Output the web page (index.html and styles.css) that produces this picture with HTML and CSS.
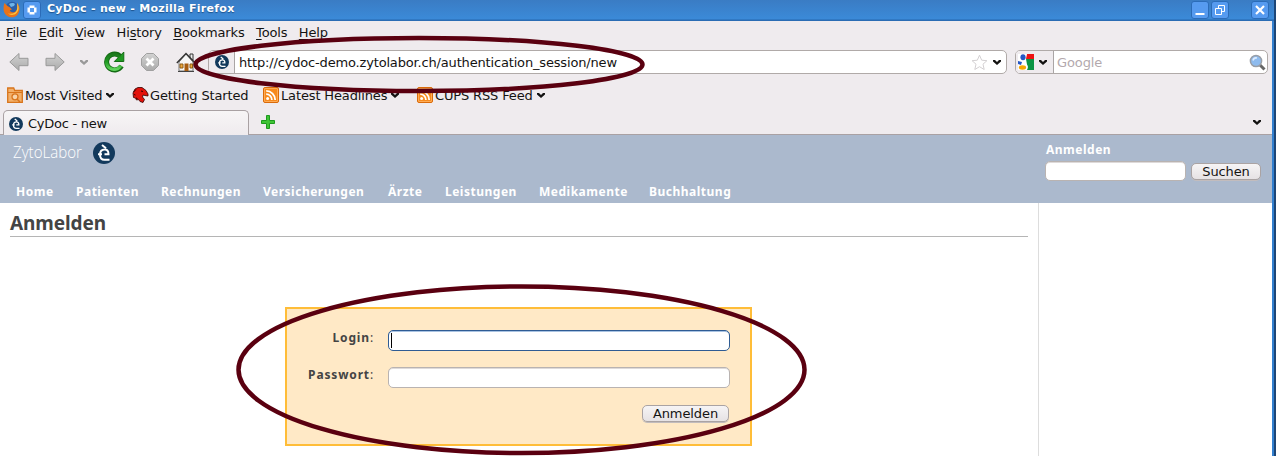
FILE: index.html
```
<!DOCTYPE html>
<html lang="de">
<head>
<meta charset="utf-8">
<title>CyDoc - new</title>
<link rel="stylesheet" href="styles.css">
</head>
<body>
<svg class="defs" width="0" height="0">
  <defs>
    <linearGradient id="grey" x1="0" y1="0" x2="0" y2="1"><stop offset="0" stop-color="#d2d2d2"/><stop offset="1" stop-color="#ababab"/></linearGradient>
    <linearGradient id="green" x1="0" y1="0" x2="0" y2="1"><stop offset="0" stop-color="#1c7a1c"/><stop offset=".5" stop-color="#1f9a22"/><stop offset="1" stop-color="#5fd35a"/></linearGradient>
    <symbol id="chev" viewBox="0 0 8 6"><path d="M0 1h2l2 2 2-2h2v1.600L4 6 0 2.600z" fill="currentColor"/></symbol>
    <symbol id="cy" viewBox="0 0 22 22">
      <circle cx="11" cy="11" r="11" fill="#12395c"/>
      <path d="M9 3l4 3.200M11.500 12.200h4c0-3-1.200-4.700-3.700-4.700-3.300 0-4.800 2-4.800 5 0 3.500 1.300 5.300 4.500 5.300h5M5 12.300h4" fill="none" stroke="#fff" stroke-width="2"/>
    </symbol>
    <symbol id="rss" viewBox="0 0 16 16">
      <rect x=".5" y=".5" width="15" height="15" rx="1.500" fill="#f78a1d" stroke="#d96a0a"/>
      <rect x="1.500" y="1.500" width="13" height="13" rx=".5" fill="none" stroke="#ffb566" stroke-width=".8"/>
      <circle cx="4.600" cy="11.600" r="1.500" fill="#fff"/>
      <path d="M3.200 7.200a5.600 5.600 0 0 1 5.700 5.700M3.200 3.900a9 9 0 0 1 9 9" fill="none" stroke="#fff" stroke-width="1.800"/>
    </symbol>
  </defs>
</svg>
<div class="window">
  <header class="titlebar">
    <svg class="fox" width="17" height="17" viewBox="0 0 17 17"><circle cx="9" cy="7.800" r="7" fill="#2b5fa8"/><path d="M6 3c2-1.500 5-1.500 6 0l-1 2-3 1z" fill="#6db4e8"/><path d="M1.500 2C0 6 0 11 3 14c3.500 3.500 9.500 3 12-1 2.200-3.500 2-8-1-11 .8 3 .7 6-1 8-2 2.200-5.500 1.500-6.200-.8L9 8.500 7 6.500 4.500 5z" fill="#e8731a"/><path d="M14 2c2.500 4 2 8-1 10.500-2.500 2-6 1.800-8 0 4 1 8 0 9-4 .5-2.500.3-4.500 0-6.500z" fill="#f9c640"/></svg>
    <span class="wbtn menu"><svg width="10" height="10" viewBox="0 0 10 10"><path d="M2.500.5h5v2h2v5h-2v2h-5v-2h-2v-5h2zM3 3v4h4V3z" fill="#fff" fill-rule="evenodd"/></svg></span>
    <span class="wtitle">CyDoc - new - Mozilla Firefox</span>
    <span class="wbtn"><svg width="12" height="12" viewBox="0 0 12 12"><path d="M1.500 9h9v2h-9z" fill="#fff"/></svg></span>
    <span class="wbtn"><svg width="12" height="12" viewBox="0 0 12 12"><path d="M1.500 4.500h6v6h-6zM4.500 4V1.500h6v6H8" fill="none" stroke="#fff"/></svg></span>
    <span class="wbtn close"><svg width="12" height="12" viewBox="0 0 12 12"><path d="M2 2l8 8M10 2l-8 8" stroke="#fff" stroke-width="2.200"/></svg></span>
  </header>
  <div class="client">
    <nav class="menubar">
      <span><u>F</u>ile</span><span><u>E</u>dit</span><span><u>V</u>iew</span><span>Hi<u>s</u>tory</span><span><u>B</u>ookmarks</span><span><u>T</u>ools</span><span><u>H</u>elp</span>
    </nav>
    <div class="toolbar">
      <div class="buttons">
        <svg width="20" height="20" viewBox="0 0 20 20"><path d="M.8 10L10 1.500v4.800h9v7.400h-9v4.800z" fill="url(#grey)" stroke="#999"/></svg>
        <svg width="20" height="20" viewBox="0 0 20 20"><path d="M19.200 10L10 1.500v4.800H1v7.400h9v4.800z" fill="url(#grey)" stroke="#999"/></svg>
        <svg class="dim" width="8" height="6"><use href="#chev"/></svg>
        <svg class="reload" width="22" height="22" viewBox="0 0 22 22"><path d="M17.500 5.500A8 8 0 1 0 18.500 15" fill="none" stroke="#146b14" stroke-width="5"/><path d="M20.800 1v9.500h-9.500z" fill="#1f9a22" stroke="#146b14"/><path d="M17 6A7.600 7.600 0 1 0 17.800 14.500" fill="none" stroke="url(#green)" stroke-width="3.200"/></svg>
        <svg width="18" height="18" viewBox="0 0 18 18"><path d="M5.500.5h7l5 5v7l-5 5h-7l-5-5v-7z" fill="url(#grey)" stroke="#a0a0a0"/><path d="M5.500 5.500l7 7M12.500 5.500l-7 7" stroke="#fff" stroke-width="2.800"/></svg>
        <svg width="20" height="20" viewBox="0 0 20 20"><path d="M14 2h3v6h-3z" fill="#eee" stroke="#333"/><path d="M3 10v9h14v-9l-7-8z" fill="#f6f6f6" stroke="#777"/><path d="M.8 11L10 1.500 19.200 11" fill="none" stroke="#333" stroke-width="1.400"/><path d="M8.500 11.500h4V19h-4z" fill="#a85d10"/><path d="M4 12h3v4H4zM14 12h2.500v4H14z" fill="#f0a93c" stroke="#8b5a14"/><path d="M2 19.500h16" stroke="#444"/></svg>
      </div>
      <div class="urlbar">
        <span class="favicon"><svg width="14" height="14"><use href="#cy"/></svg></span>
        <span class="url">http://cydoc-demo.zytolabor.ch/authentication_session/new</span>
        <svg class="star" width="17" height="17" viewBox="0 0 17 17"><path d="M8.500 1.200l2.200 5 5.200.5-3.900 3.500 1.200 5.300-4.700-2.800-4.700 2.800L5 10.200 1.100 6.700l5.200-.5z" fill="#fff" stroke="#d3d0d2"/></svg>
        <svg width="8" height="6"><use href="#chev"/></svg>
      </div>
      <div class="searchbar">
        <span class="engine">
          <svg width="16" height="16" viewBox="0 0 16 16"><path d="M0 0h16v16H0z" fill="#fff"/><path d="M9 0h7v5H8z" fill="#e11"/><path d="M8 5h8v11H9c1-2 1.500-3.500 0-5.500z" fill="#0b9444"/><ellipse cx="5" cy="3.200" rx="2.600" ry="3" fill="#2456c4"/><path d="M0 7l4 1-1 3-3-1z" fill="#2456c4"/><ellipse cx="4.500" cy="13.500" rx="3.600" ry="2.200" fill="#f5a800"/></svg>
          <svg width="8" height="6"><use href="#chev"/></svg>
        </span>
        <span class="hint">Google</span>
        <svg width="17" height="17" viewBox="0 0 17 17"><path d="M10.500 10.500l5 5" stroke="#666" stroke-width="3"/><circle cx="7" cy="7" r="5.600" fill="#8ebbee" stroke="#999ea6" stroke-width="1.500"/><path d="M4 6.500c.5-2 2-3 4-2.500" stroke="#dcecff" stroke-width="1.600" fill="none"/></svg>
      </div>
    </div>
    <div class="bookmarks">
      <span class="bm visited"><svg width="16" height="16" viewBox="0 0 16 16"><path d="M.7 15.300V1h6l1 2.500h7.600v11.800z" fill="#f3b06a" stroke="#d8741b" stroke-width="1.300"/><path d="M1 5.500h14" stroke="#d8741b"/><circle cx="8" cy="9.800" r="3" fill="#f8d3a8" stroke="#d8741b" stroke-width="1.300"/><path d="M10 12l3 3" stroke="#d8741b" stroke-width="1.500"/></svg><span>Most Visited</span><svg class="arrow" width="8" height="6"><use href="#chev"/></svg></span>
      <span class="bm start"><svg width="17" height="16" viewBox="0 0 17 16"><path d="M3 2l3-1.500h4l4 3 2 3.500v2l-3-.5-2-.5-.5 2 2 2.500-1.500 3-3-1-1.500-2-2 .5-1-2-2-.5L1 6z" fill="#e3120b" stroke="#300" stroke-width=".8"/><path d="M4 2.500L1.500 5M2 7.500l1.500.5M4 11l1.500.5M9 4l2 .5" stroke="#300"/></svg><span>Getting Started</span></span>
      <span class="bm latest"><svg width="16" height="16"><use href="#rss"/></svg><span>Latest Headlines</span><svg class="arrow" width="8" height="6"><use href="#chev"/></svg></span>
      <span class="bm cups"><svg width="16" height="16"><use href="#rss"/></svg><span>CUPS RSS Feed</span><svg class="arrow" width="8" height="6"><use href="#chev"/></svg></span>
    </div>
    <div class="tabs">
      <div class="tab"><svg width="14" height="14"><use href="#cy"/></svg>CyDoc - new</div>
      <svg class="plus" width="14" height="14" viewBox="0 0 14 14"><path d="M5.500.5h3v5h5v3h-5v5h-3v-5h-5v-3h5z" fill="#3fc435" stroke="#1d9a1d"/></svg>
      <svg class="all" width="8" height="6"><use href="#chev"/></svg>
    </div>
    <section class="banner">
      <div class="brand">
        <div class="logo">
          <svg width="74" height="24" viewBox="0 0 74 24"><text class="logotext" x="2" y="17" textLength="69" lengthAdjust="spacingAndGlyphs">ZytoLabor</text></svg>
          <svg width="22" height="22"><use href="#cy"/></svg>
        </div>
        <nav class="sitenav"><a>Home</a><a>Patienten</a><a>Rechnungen</a><a>Versicherungen</a><a>Ärzte</a><a>Leistungen</a><a>Medikamente</a><a>Buchhaltung</a></nav>
      </div>
      <div class="quick">
        <a>Anmelden</a>
        <div class="quickrow"><span class="field"></span><span class="btn">Suchen</span></div>
      </div>
    </section>
    <main class="content">
      <div class="main">
        <h1>Anmelden</h1>
        <form class="login">
          <label><span><b>Login</b>:</span><span class="field focus"><i class="caret"></i></span></label>
          <label><span><b>Passwort</b>:</span><span class="field"></span></label>
          <span class="btn submit">Anmelden</span>
        </form>
      </div>
      <aside class="side"></aside>
    </main>
  </div>
</div>
<svg class="marks" width="1276" height="456" viewBox="0 0 1276 456">
  <ellipse cx="419" cy="64.500" rx="223.500" ry="26.500"/>
  <ellipse cx="521.500" cy="369.800" rx="283" ry="83.300"/>
</svg>
</body>
</html>
```
FILE: styles.css
```
* { box-sizing: border-box; }
body { margin: 0; width: 1276px; height: 456px; overflow: hidden; position: relative; font: 13px/16px "DejaVu Sans", sans-serif; color: #141312; background: #fff; }
svg { display: block; flex: none; }
.defs { position: absolute; }
.window { height: 456px; display: flex; flex-direction: column; }
.titlebar { height: 21px; display: flex; align-items: center; padding: 0 5px 2px 3px; border-right: 2px solid #1d4677; background: linear-gradient(#3a7cc4, #3b8ad8 90%, #2a6cb4 95%); color: #fff; }
.wtitle { font: bold 11px/16px "DejaVu Sans", sans-serif; letter-spacing: .28px; margin-left: 6px; flex: 1; text-shadow: 0 1px 1px #1d528c; padding-bottom: 2px; }
.wbtn { width: 18px; height: 18px; margin-right: 2px; border: 1px solid #2b6cb8; border-radius: 3px; background: #569bf0; display: flex; align-items: center; justify-content: center; }
.menu { margin: 0 0 0 3px; }
.close { margin: 0 0 0 20px; }
.client { flex: 1; width: 1276px; padding-right: 4px; display: flex; flex-direction: column; background: linear-gradient(90deg, #efebee 1272px, #3380cf 1272px 1274px, #1d4677 1274px); }
.menubar { height: 23px; display: flex; align-items: center; gap: 11.500px; padding-left: 6px; letter-spacing: -.15px; }
.menubar u { text-underline-offset: 2px; text-decoration-thickness: 1px; }
.toolbar { height: 36px; display: flex; align-items: center; }
.buttons { width: 208px; display: grid; grid-template-columns: 36px 35px 24px 37px 35px 21px; align-items: center; padding-left: 9px; }
.reload { margin-left: -1px; }
.dim { color: #999; }
.urlbar { width: 799px; height: 24px; border: 1px solid #b0aaa8; border-radius: 5px; background: #fff; display: flex; align-items: center; padding-right: 5px; overflow: hidden; }
.favicon { width: 26px; height: 22px; background: #efebee; border-right: 1px solid #aaa5a5; display: flex; align-items: center; justify-content: center; }
.url { flex: 1; margin-left: 4px; letter-spacing: -.165px; padding-top: 2px; }
.star { margin-right: 5px; }
.searchbar { width: 253px; height: 24px; margin-left: 8px; border: 1px solid #b0aaa8; border-radius: 5px; background: #fff; display: flex; align-items: center; padding-right: 1px; overflow: hidden; }
.engine { width: 38px; height: 22px; background: #efebee; border-right: 1px solid #aaa5a5; display: flex; align-items: center; gap: 5px; padding-left: 2px; }
.hint { flex: 1; margin-left: 3px; color: #b3a9ad; letter-spacing: -.1px; padding-top: 2px; }
.bookmarks { height: 30px; display: grid; grid-template-columns: 125px 131px 154px 1fr; align-items: center; padding-left: 7px; }
.bm { display: flex; align-items: center; gap: 2px; letter-spacing: -.14px; white-space: nowrap; }
.bm span { padding-top: 2px; }
.start { gap: 1px; }
.visited .arrow { margin-left: 2px; }
.arrow { margin-left: 2px; }
.tabs { height: 25px; display: flex; border-bottom: 1px solid #a9a1a3; padding-left: 3px; }
.tab { width: 246px; height: 25px; border: 1px solid #a9a1a3; border-bottom: 0; border-radius: 5px 5px 0 0; background: linear-gradient(#f7f5f6, #efebee); display: flex; align-items: center; gap: 5px; padding-left: 5px; letter-spacing: -.25px; padding-top: 2px; }
.plus { margin: 5px 0 0 12px; }
.all { margin: 9px 11px 0 auto; }
.banner { height: 68px; background: #abb9cd; display: flex; font: bold 12px/16px "Noto Sans", sans-serif; letter-spacing: .5px; color: #fff; }
.brand { flex: 1; display: flex; flex-direction: column; }
.logo { height: 36px; display: flex; align-items: center; gap: 8px; padding-left: 11px; }
.logotext { font: 400 15.500px "Open Sans", sans-serif; font-weight: 300; letter-spacing: 0; fill: #fff; }
.sitenav { display: grid; grid-template-columns: 60px 85px 102px 125px 57px 94px 110px 90px; padding: 13px 0 0 16px; }
.quick { width: 227px; padding-top: 7px; }
.quick a { margin-left: 1px; display: block; }
.quickrow { display: flex; align-items: center; gap: 6px; margin-top: 3px; }
.quickrow .field { width: 141px; height: 20px; }
.quickrow .btn { width: 70px; margin-left: -1px; }
.field { display: block; background: #fff; border: 1px solid #b9b3b1; border-radius: 5px; box-shadow: inset 0 1px #dedada; }
.btn { height: 17px; border: 1px solid #aaa3a3; border-radius: 5px; background: linear-gradient(#f6f4f5, #e6e2e4); box-shadow: 0 1px #c2bcbd; color: #141312; font: 13px/15px "DejaVu Sans", sans-serif; letter-spacing: -.1px; text-align: center; }
.content { flex: 1; display: flex; background: #fff; }
.main { width: 1038px; padding: 0 10px; }
.side { flex: 1; border-left: 1px solid #ddd; }
h1 { margin: 0; height: 34px; border-bottom: 1px solid #b5b5b5; font: bold 19px/26px "Noto Sans", sans-serif; letter-spacing: -.1px; padding-top: 7px; color: #444; }
.login { width: 467px; height: 139px; margin: 70px 0 0 275px; border: 2px solid #ffbd38; background: #ffe9c6; display: flex; flex-direction: column; padding: 21px 20px 0 0; }
.login label { height: 37px; display: flex; justify-content: flex-end; gap: 14px; font: 12px/16px "Noto Sans", sans-serif; letter-spacing: .85px; color: #444; }
.login .field { width: 342px; height: 21px; }
.login .focus { border-color: #2f5c94; box-shadow: inset 0 1px #a9c3e2; padding: 2px 0 0 2px; }
.caret { display: block; width: 1px; height: 15px; background: #000; }
.submit { width: 87px; align-self: flex-end; margin: 1px 1px 0 0; }
.marks { position: absolute; left: 0; top: 0; fill: none; stroke: #5a0010; stroke-width: 4.500; }
```
